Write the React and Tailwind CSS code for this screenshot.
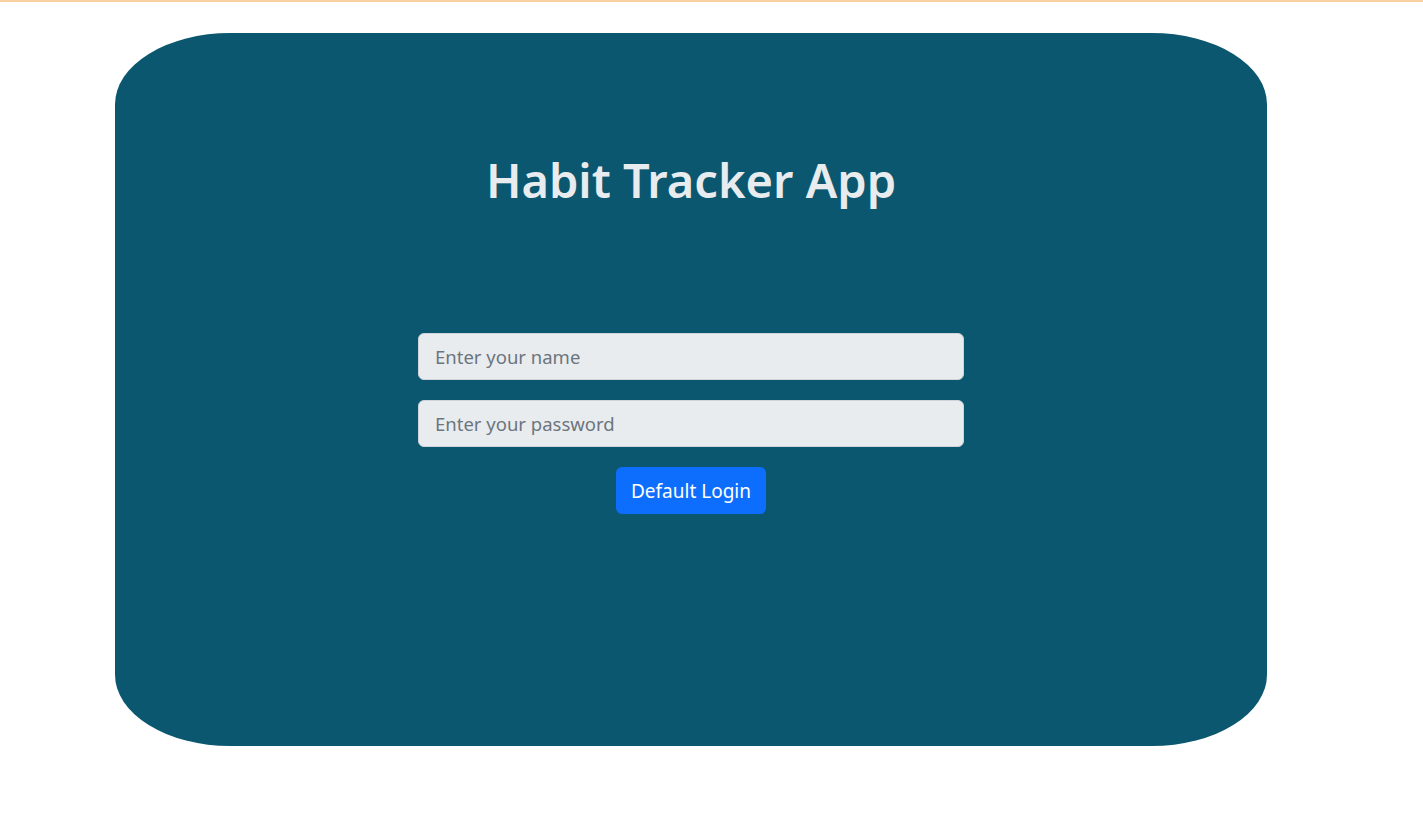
export default function App() {
  return (
    <div className="min-h-[821px] bg-white font-['Noto_Sans',sans-serif]">
      <div className="h-[2px] bg-[#f8cfa0]" />
      <div className="ml-[115px] mt-[31px] flex h-[713px] w-[1152px] flex-col items-center rounded-[10%] bg-[#0b5770]">
        <h1 className="mt-[119px] text-[47px] font-semibold leading-[1.2] text-[#e9ecef]">
          Habit Tracker App
        </h1>
        <form className="mt-[125px] flex w-[546px] flex-col items-center gap-5">
          <input
            type="text"
            placeholder="Enter your name"
            className="h-[47px] w-full rounded-md border border-[#ced4da] bg-[#e9ecef] px-4 text-[18.5px] text-[#212529] placeholder:text-[#6c757d] focus:outline-none"
          />
          <input
            type="password"
            placeholder="Enter your password"
            className="h-[47px] w-full rounded-md border border-[#ced4da] bg-[#e9ecef] px-4 text-[18.5px] text-[#212529] placeholder:text-[#6c757d] focus:outline-none"
          />
          <button
            type="button"
            className="h-[47px] w-[150px] rounded-md bg-[#0d6efd] text-[19px] text-white"
          >
            Default Login
          </button>
        </form>
      </div>
    </div>
  );
}
